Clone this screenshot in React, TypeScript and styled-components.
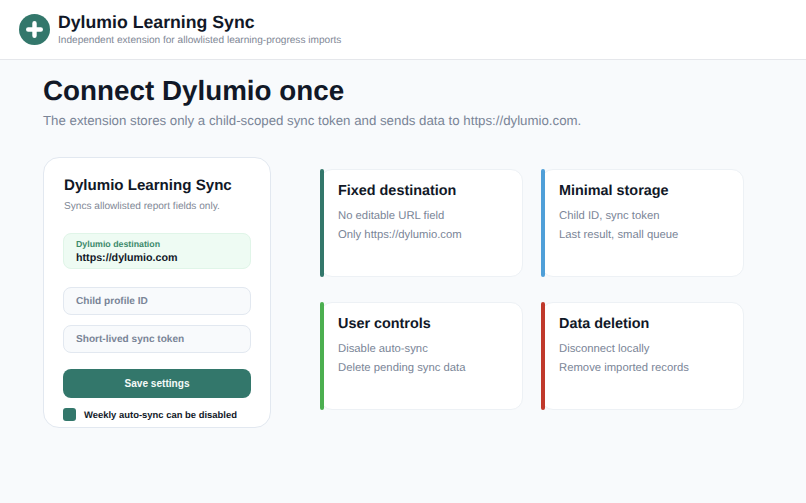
import React from "react";
import styled, { createGlobalStyle } from "styled-components";

const Global = createGlobalStyle`
  html, body { margin: 0; padding: 0; background: #f8fafc; }
  body { font-family: "Liberation Sans", Arial, sans-serif; color: #111827; text-rendering: geometricPrecision; }
  * { box-sizing: border-box; }
`;

const Page = styled.div`
  width: 806px;
  height: 503px;
  overflow: hidden;
  background: #f8fafc;
`;

const Header = styled.header`
  height: 60px;
  background: #fff;
  border-bottom: 1px solid #e5e7eb;
  display: flex;
  align-items: center;
  gap: 8px;
  padding: 0 0 1px 19px;
`;

const LogoMark = styled.svg`
  width: 31px;
  height: 31px;
  flex: none;
`;

const Brand = styled.div`
  display: flex;
  flex-direction: column;
  gap: 2px;
  margin-top: 1px;
`;

const BrandName = styled.div`
  font-size: 17.7px;
  line-height: 21px;
  font-weight: 700;
  color: #111827;
`;

const BrandTag = styled.div`
  font-size: 10.1px;
  line-height: 12px;
  color: #7f8896;
`;

const Main = styled.main`
  padding: 14px 43px 0;
`;

const Title = styled.h1`
  margin: 0;
  font-size: 27.8px;
  line-height: 33px;
  font-weight: 700;
  color: #111827;
`;

const Lead = styled.p`
  margin: 5px 0 0;
  font-size: 13.27px;
  line-height: 17px;
  color: #7a8597;
`;

const Columns = styled.div`
  display: flex;
  align-items: flex-start;
  margin-top: 28px;
`;

const Panel = styled.section`
  width: 228px;
  height: 271px;
  flex: none;
  background: #fff;
  border: 1px solid #e2e8f0;
  border-radius: 16px;
  padding: 19px 19px 0;
`;

const PanelTitle = styled.h2`
  margin: 0 0 0 1px;
  font-size: 15.1px;
  line-height: 18px;
  font-weight: 700;
  color: #111827;
`;

const PanelNote = styled.p`
  margin: 5px 0 0 1px;
  font-size: 10.1px;
  line-height: 13px;
  color: #7f8896;
`;

const Destination = styled.div`
  margin-top: 20px;
  height: 36px;
  background: #eefbf3;
  border: 1px solid #e0f5e8;
  border-radius: 8px;
  padding: 5px 12px 0;
`;

const DestinationLabel = styled.div`
  font-size: 8.8px;
  line-height: 11px;
  font-weight: 700;
  color: #3d8a6b;
`;

const DestinationValue = styled.div`
  margin-top: 1px;
  font-size: 10.7px;
  line-height: 14px;
  font-weight: 700;
  color: #111827;
`;

const Field = styled.div`
  margin-top: 10px;
  height: 28px;
  background: #f8fafc;
  border: 1px solid #e2e8f0;
  border-radius: 8px;
  padding: 0 12px;
  display: flex;
  align-items: center;
  font-size: 10.1px;
  font-weight: 700;
  color: #7a8597;
`;

const FirstField = styled(Field)`
  margin-top: 18px;
`;

const SaveButton = styled.button`
  display: block;
  width: 100%;
  height: 29px;
  margin-top: 16px;
  background: #33776b;
  border: 0;
  border-radius: 8px;
  color: #f4faf8;
  font: 700 10.1px "Liberation Sans", Arial, sans-serif;
`;

const Toggle = styled.label`
  display: flex;
  align-items: center;
  gap: 8px;
  margin-top: 11px;
  font-size: 9.45px;
  line-height: 13px;
  font-weight: 700;
  color: #111827;
`;

const ToggleBox = styled.span`
  width: 13px;
  height: 13px;
  background: #33776b;
  border-radius: 3px;
  flex: none;
  margin-top: -2px;
`;

const Cards = styled.div`
  display: grid;
  grid-template-columns: 203px 203px;
  grid-auto-rows: 108px;
  column-gap: 18px;
  row-gap: 25px;
  margin: 12px 0 0 49px;
`;

const Card = styled.article<{ $accent: string }>`
  position: relative;
  background: #fff;
  border: 1px solid #edf1f5;
  border-radius: 12px;
  padding: 13px 17px;

  &::before {
    content: "";
    position: absolute;
    left: -1px;
    top: -1px;
    bottom: -1px;
    width: 4px;
    border-radius: 2px;
    background: ${(p) => p.$accent};
  }
`;

const CardTitle = styled.h3`
  margin: 0 0 7px;
  font-size: 14.4px;
  line-height: 17px;
  font-weight: 700;
  color: #111827;
`;

const CardLine = styled.p`
  margin: 0;
  font-size: 11.3px;
  line-height: 19px;
  color: #7a8597;
`;

const cards = [
  { title: "Fixed destination", accent: "#33776b", lines: ["No editable URL field", "Only https://dylumio.com"] },
  { title: "Minimal storage", accent: "#4f9fd8", lines: ["Child ID, sync token", "Last result, small queue"] },
  { title: "User controls", accent: "#4caf50", lines: ["Disable auto-sync", "Delete pending sync data"] },
  { title: "Data deletion", accent: "#c0392b", lines: ["Disconnect locally", "Remove imported records"] },
];

export default function App() {
  return (
    <Page>
      <Global />
      <Header>
        <LogoMark viewBox="0 0 31 31" aria-hidden="true">
          <circle cx="15.5" cy="15.5" r="15.5" fill="#33776b" />
          <path d="M15.5 9.2v12.6M9.2 15.5h12.6" stroke="#fff" strokeWidth="4.4" strokeLinecap="round" />
        </LogoMark>
        <Brand>
          <BrandName>Dylumio Learning Sync</BrandName>
          <BrandTag>Independent extension for allowlisted learning-progress imports</BrandTag>
        </Brand>
      </Header>
      <Main>
        <Title>Connect Dylumio once</Title>
        <Lead>The extension stores only a child-scoped sync token and sends data to https://dylumio.com.</Lead>
        <Columns>
          <Panel>
            <PanelTitle>Dylumio Learning Sync</PanelTitle>
            <PanelNote>Syncs allowlisted report fields only.</PanelNote>
            <Destination>
              <DestinationLabel>Dylumio destination</DestinationLabel>
              <DestinationValue>https://dylumio.com</DestinationValue>
            </Destination>
            <FirstField>Child profile ID</FirstField>
            <Field>Short-lived sync token</Field>
            <SaveButton type="button">Save settings</SaveButton>
            <Toggle>
              <ToggleBox />
              Weekly auto-sync can be disabled
            </Toggle>
          </Panel>
          <Cards>
            {cards.map((c) => (
              <Card key={c.title} $accent={c.accent}>
                <CardTitle>{c.title}</CardTitle>
                {c.lines.map((l) => (
                  <CardLine key={l}>{l}</CardLine>
                ))}
              </Card>
            ))}
          </Cards>
        </Columns>
      </Main>
    </Page>
  );
}
